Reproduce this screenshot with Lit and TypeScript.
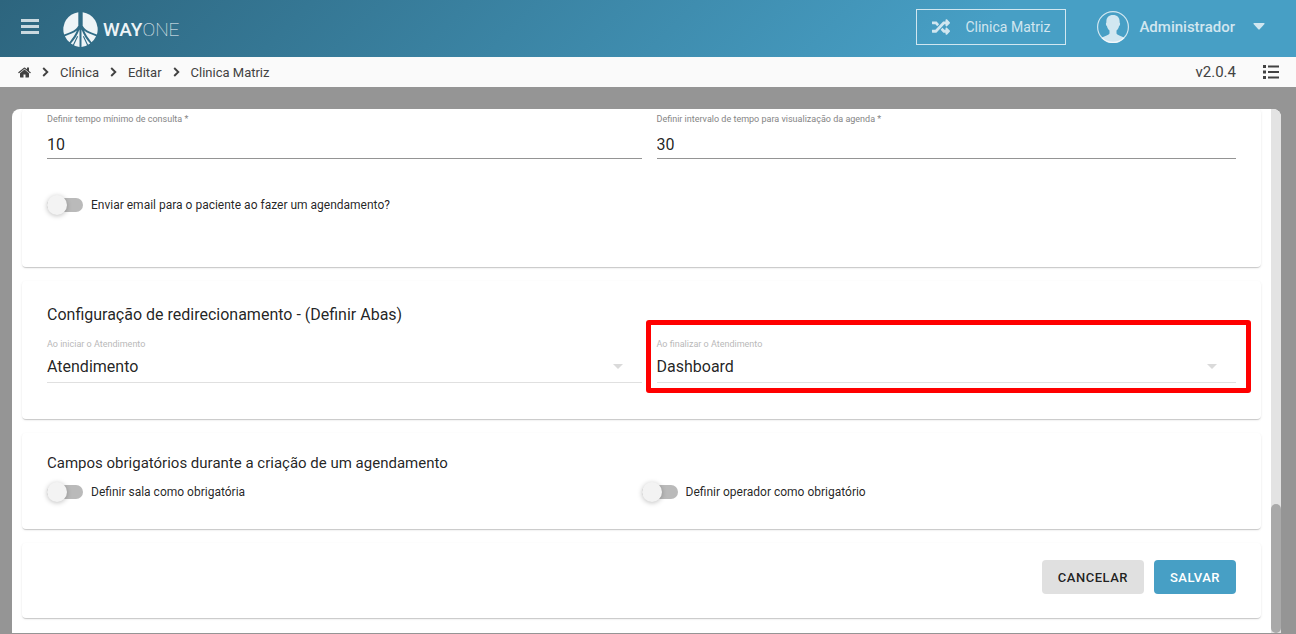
import { LitElement, html, css, svg } from "lit";
import { customElement, property } from "lit/decorators.js";

const randomIcon = svg`<path fill="currentColor" d="M504.971 359.029c9.373 9.373 9.373 24.569 0 33.941l-80 79.984c-15.01 15.01-40.971 4.49-40.971-16.971V416h-58.785a12.004 12.004 0 0 1-8.773-3.812l-70.556-75.596 53.333-57.143L352 336h32v-39.981c0-21.438 25.943-31.998 40.971-16.971l80 79.981zM12 176h84l52.781 56.551 53.333-57.143-70.556-75.596A11.999 11.999 0 0 0 122.785 96H12c-6.627 0-12 5.373-12 12v56c0 6.627 5.373 12 12 12zm372 0v39.984c0 21.46 25.961 31.98 40.971 16.971l80-79.984c9.373-9.373 9.373-24.569 0-33.941l-80-79.981C409.943 24.021 384 34.582 384 56.019V96h-58.785a12.004 12.004 0 0 0-8.773 3.812L96 336H12c-6.627 0-12 5.373-12 12v56c0 6.627 5.373 12 12 12h110.785c3.326 0 6.503-1.381 8.773-3.812L352 176h32z"/>`;
const homeIcon = svg`<path fill="currentColor" d="M1472 992v480q0 26-19 45t-45 19h-384v-384h-256v384h-384q-26 0-45-19t-19-45v-480q0-1 .5-3t.5-3l575-474 575 474q1 2 1 6zm223-69l-62 74q-8 9-21 11h-3q-13 0-21-7l-692-577-692 577q-12 8-24 7-13-2-21-11l-62-74q-8-10-7-23.5t11-21.5l719-599q32-26 76-26t76 26l244 204v-195q0-14 9-23t23-9h192q14 0 23 9t9 23v408l219 182q10 8 11 21.5t-7 23.5z"/>`;

@customElement("way-toggle")
class WayToggle extends LitElement {
  @property() label = "";
  static styles = css`
    :host { display: block; }
    .row { display: flex; align-items: center; gap: 8px; height: 20px; font-size: 12px; line-height: 20px; color: rgba(0, 0, 0, 0.87); cursor: pointer; }
    .switch { appearance: none; flex: none; width: 36px; height: 14px; margin: 0; border-radius: 8px; background: #bababa; cursor: pointer; }
    .switch::before { content: ""; display: block; width: 20px; height: 20px; margin-top: -3px; border-radius: 50%; background: #f3f3f3; box-shadow: 0 1px 5px rgba(0, 0, 0, 0.25); }
    .switch:checked::before { margin-left: 16px; background: #479fc5; }
  `;
  render() {
    return html`<label class="row"><input class="switch" type="checkbox" /><span>${this.label}</span></label>`;
  }
}

@customElement("way-header")
class WayHeader extends LitElement {
  static styles = css`
    :host { display: block; }
    .bar { display: flex; align-items: center; height: 57px; box-sizing: border-box; padding: 0 31px 4px 21px; color: rgba(255, 255, 255, 0.75); background: linear-gradient(135deg, #2d657e 0%, #479fc5 75%); }
    button { font: inherit; color: inherit; background: none; border: 0; padding: 0; cursor: pointer; }
    svg { display: block; flex: none; }
    .logo { display: flex; align-items: center; gap: 5px; margin-left: 24px; padding-top: 6px; color: #eef4f7; text-decoration: none; font: 500 19px/24px Roboto, sans-serif; }
    .thin { font-weight: 100; }
    .clinic { display: flex; align-items: center; gap: 15px; height: 36px; margin-left: auto; padding: 0 15px; border: 1px solid rgba(255, 255, 255, 0.75); font-size: 14px; }
    .user { display: flex; align-items: center; gap: 10px; margin-left: 31px; font-size: 15px; font-weight: 500; }
    .caret { margin-left: 8px; }
  `;
  render() {
    return html`<header class="bar">
      <button aria-label="Menu">
        <svg width="18" height="16" viewBox="0 0 18 16"><path fill="currentColor" d="M0 0h18v3H0zM0 6h18v3H0zM0 12h18v3H0z" /></svg>
      </button>
      <a class="logo" href="#">
        <svg width="35" height="35" viewBox="0 0 35 35" fill="currentColor">
          <path d="M15.3.2V13.2C14.2 17.2 9 19.8 1.1 22.6A17.4 17.4 0 0 1 15.3.2Z" />
          <path d="M19.7.2V13.2C20.8 17.2 26 19.8 33.9 22.6A17.4 17.4 0 0 0 19.7.2Z" />
          <path d="M1.9 24.2C7 22.5 11 21 13.9 18.6 12.4 22.5 9.8 26 6.5 30.2A17.4 17.4 0 0 1 1.9 24.2Z" />
          <path d="M33.1 24.2C28 22.5 24 21 21.1 18.6 22.6 22.5 25.2 26 28.5 30.2A17.4 17.4 0 0 0 33.1 24.2Z" />
          <path d="M7.8 31.6C11.4 27.4 14.4 23.4 16.5 17.5V34.9A17.4 17.4 0 0 1 7.8 31.6Z" />
          <path d="M27.2 31.6C23.6 27.4 20.6 23.4 18.5 17.5V34.9A17.4 17.4 0 0 0 27.2 31.6Z" />
          <path d="M14.6 24.2 10.2 33.6M20.4 24.2 24.8 33.6" stroke="#306b86" stroke-width="1.1" />
        </svg>
        <span>WAY<span class="thin">ONE</span></span>
      </a>
      <button class="clinic">
        <svg width="18" height="18" viewBox="0 0 512 512">${randomIcon}</svg>
        <span>Clinica Matriz</span>
      </button>
      <button class="user">
        <svg width="32" height="32" viewBox="0 0 32 32">
          <circle cx="16" cy="16" r="15.4" fill="none" stroke="currentColor" stroke-width="1.2" />
          <path fill="currentColor" d="M16 4c4.6 0 7 2.8 6.6 7.6.9.3.5 3-.6 3.6-.5 2-1.3 3.3-2.5 4.4v3c1.2 2 5.2 2.500 8.200 4.300A15.400 15.400 0 0 1 4.300 26.900c3-1.800 7-2.300 8.200-4.300v-3c-1.200-1.100-2-2.400-2.500-4.400-1.100-.6-1.500-3.300-.6-3.6C9 6.800 11.400 4 16 4Z" />
        </svg>
        <span>Administrador</span>
        <svg class="caret" width="12" height="7" viewBox="0 0 12 7"><path fill="currentColor" d="M1 0h10q1 .3.5 1L6.700 6.300q-.7.7-1.400 0L.5 1Q0 .3 1 0z" /></svg>
      </button>
    </header>`;
  }
}

@customElement("app-root")
class AppRoot extends LitElement {
  static styles = css`
    :host { display: flex; flex-direction: column; height: 100vh; overflow: hidden; background: #959595; color: rgba(0, 0, 0, 0.87); font-family: Roboto, sans-serif; }
    svg { display: block; flex: none; }
    .crumbs { display: flex; align-items: center; gap: 11px; height: 30px; padding: 0 17px 0 18px; background: #fafafa; color: #424242; font-size: 13px; }
    .crumbs a { color: inherit; text-decoration: none; }
    .version { margin-left: auto; font-size: 15px; }
    .list { margin-left: 16px; padding: 0; border: 0; background: none; color: inherit; cursor: pointer; }
    .panel { display: flex; flex: 1; min-height: 0; margin: 22px 15px 1px 12px; border-radius: 8px 8px 0 0; overflow: hidden; background: #fff; }
    .content { display: flex; flex: 1; flex-direction: column; gap: 14px; min-width: 0; padding: 0 10px; }
    .track { display: flex; flex-direction: column; justify-content: flex-end; width: 10px; background: #e3e3e3; }
    .thumb { height: 129px; border-radius: 5px; background: #a9a9a9; }
    .card { padding: 0 25px; border-radius: 4px; background: #fff; box-shadow: 0 2px 1px -1px rgba(0, 0, 0, 0.1), 0 1px 1px rgba(0, 0, 0, 0.08), 0 1px 3px rgba(0, 0, 0, 0.08); }
    .schedule { padding-top: 4px; padding-bottom: 52px; }
    .redirect { padding-top: 22px; padding-bottom: 36px; }
    .required { padding-top: 18px; padding-bottom: 27px; }
    .actions { display: flex; justify-content: flex-end; gap: 10px; padding-top: 17px; padding-bottom: 24px; }
    .cols { display: grid; grid-template-columns: 1fr 1fr; }
    .indent { margin-left: 15px; }
    .field { display: flex; flex-direction: column; position: relative; }
    .field label { font-size: 9px; line-height: 12px; color: #858585; }
    .field input { height: 34px; box-sizing: border-box; min-width: 0; padding: 5px 0 0; border: 0; border-bottom: 1px solid #949494; border-radius: 0; outline: 0; background: none; color: inherit; font: 16px Roboto, sans-serif; }
    .choice label { color: #b9b9b9; }
    .select { display: grid; align-items: center; height: 32px; border-bottom: 1px solid #e0e0e0; }
    .select select { grid-area: 1 / 1; width: 100%; height: 32px; padding: 0; border: 0; outline: 0; appearance: none; background: none; color: inherit; font: 16px Roboto, sans-serif; }
    .select svg { grid-area: 1 / 1; justify-self: end; margin-right: 19px; pointer-events: none; }
    .marked::after { content: ""; position: absolute; inset: -18px -15px -10px -11px; border: 5px solid #f00; border-radius: 3px; pointer-events: none; }
    h2 { margin: 0 0 11px; font-size: 16px; font-weight: 400; line-height: 24px; }
    .small { margin-bottom: 7px; font-size: 15px; }
    .gap { margin-top: 36px; }
    .btn { height: 34px; padding: 0 16px; border: 0; border-radius: 4px; background: #e0e0e0; color: rgba(0, 0, 0, 0.87); font: 500 13px Roboto, sans-serif; letter-spacing: 0.5px; cursor: pointer; }
    .primary { background: #479fc5; color: #fff; }
  `;

  private chevron() {
    return html`<svg width="7" height="10" viewBox="0 0 7 10"><path d="M1.2 1 5.3 5 1.2 9" fill="none" stroke="currentColor" stroke-width="1.9" /></svg>`;
  }

  private arrow() {
    return html`<svg width="10" height="5" viewBox="0 0 10 5"><path d="M0 0h10L5 5z" fill="#dadada" /></svg>`;
  }

  render() {
    return html`
      <way-header></way-header>
      <nav class="crumbs">
        <a href="#" aria-label="Início"><svg width="13" height="13" viewBox="64 200 1664 1400">${homeIcon}</svg></a>
        ${this.chevron()}<a href="#">Clínica</a>
        ${this.chevron()}<a href="#">Editar</a>
        ${this.chevron()}<a href="#">Clinica Matriz</a>
        <span class="version">v2.0.4</span>
        <button class="list" aria-label="Lista">
          <svg width="16" height="14" viewBox="0 0 16 14"><path fill="currentColor" d="M0 0h3v3H0zM0 5.5h3v3H0zM0 11h3v3H0zM5 .5h11v2H5zM5 6h11v2H5zM5 11.5h11v2H5z" /></svg>
        </button>
      </nav>
      <main class="panel">
        <div class="content">
          <section class="card schedule">
            <div class="cols">
              <div class="field"><label for="min">Definir tempo mínimo de consulta *</label><input id="min" value="10" /></div>
              <div class="field indent"><label for="step">Definir intervalo de tempo para visualização da agenda *</label><input id="step" value="30" /></div>
            </div>
            <way-toggle class="gap" label="Enviar email para o paciente ao fazer um agendamento?"></way-toggle>
          </section>
          <section class="card redirect">
            <h2>Configuração de redirecionamento - (Definir Abas)</h2>
            <div class="cols">
              <div class="field choice">
                <label for="start">Ao iniciar o Atendimento</label>
                <div class="select"><select id="start"><option>Atendimento</option></select>${this.arrow()}</div>
              </div>
              <div class="field choice indent marked">
                <label for="end">Ao finalizar o Atendimento</label>
                <div class="select"><select id="end"><option>Dashboard</option></select>${this.arrow()}</div>
              </div>
            </div>
          </section>
          <section class="card required">
            <h2 class="small">Campos obrigatórios durante a criação de um agendamento</h2>
            <div class="cols">
              <way-toggle label="Definir sala como obrigatória"></way-toggle>
              <way-toggle label="Definir operador como obrigatório"></way-toggle>
            </div>
          </section>
          <section class="card actions">
            <button class="btn">CANCELAR</button>
            <button class="btn primary">SALVAR</button>
          </section>
        </div>
        <div class="track"><div class="thumb"></div></div>
      </main>
    `;
  }
}
